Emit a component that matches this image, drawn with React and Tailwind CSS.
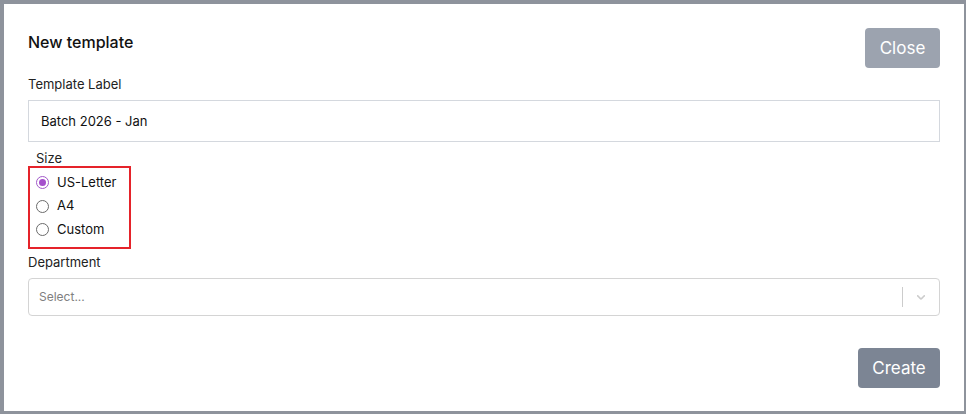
import React, { useState } from "react";

const sizes = ["US-Letter", "A4", "Custom"];

const App = () => {
  const [size, setSize] = useState("US-Letter");
  const [label, setLabel] = useState("Batch 2026 - Jan");

  return (
    <div
      className="w-[966px] h-[414px] bg-[#8e939c] pt-[4px] pl-[4px] pr-[2px] pb-[3px]"
      style={{ fontFamily: "Inter, 'Noto Sans', sans-serif" }}
    >
      <div className="bg-white h-full px-[24px] pt-[24px] flex flex-col">
        {/* Header */}
        <div className="flex items-start justify-between">
          <h2 className="text-[16px] font-medium text-[#111] mt-[2px]">New template</h2>
          <button className="w-[75px] h-[40px] bg-[#9ca3af] text-white text-[17px] rounded-[4px] pt-[1px]">
            Close
          </button>
        </div>

        {/* Template label */}
        <label className="block text-[13px] text-[#222] mt-[8px] leading-[16px]">Template Label</label>
        <input
          value={label}
          onChange={(e) => setLabel(e.target.value)}
          className="mt-[8px] h-[42px] w-full border border-[#d4d8de] px-[12px] text-[13px] text-[#111] outline-none"
        />

        {/* Size */}
        <div className="text-[13px] text-[#222] ml-[8px] mt-[8px] leading-[16px]">Size</div>
        <div className="w-[103px] border-2 border-[#e5232a] mt-[0px] pt-[6px] pb-[9px] pl-[6px] flex flex-col gap-[6.5px]">
          {sizes.map((s) => (
            <label key={s} className="flex items-center gap-[8px] text-[13px] text-[#111] h-[17px] cursor-pointer">
              <span
                className={
                  "w-[13px] h-[13px] rounded-full border flex items-center justify-center " +
                  (size === s ? "border-[#a259c9]" : "border-[#6b6b6b]")
                }
                onClick={() => setSize(s)}
              >
                {size === s && <span className="w-[7px] h-[7px] rounded-full bg-[#a54fcc]" />}
              </span>
              {s}
            </label>
          ))}
        </div>

        {/* Department */}
        <div className="text-[13px] text-[#222] mt-[5px] leading-[16px]">Department</div>
        <div className="mt-[8px] h-[38px] w-full border border-[#d4d4d4] rounded-[4px] flex items-center">
          <span className="flex-1 pl-[10px] text-[12px] text-[#808080]">Select...</span>
          <span className="w-px h-[20px] bg-[#cccccc]" />
          <span className="w-[36px] flex items-center justify-center text-[#cccccc]">
            <svg width="14" height="14" viewBox="0 0 20 20" fill="currentColor">
              <path d="M4.516 7.548c0.436-0.446 1.043-0.481 1.576 0l3.908 3.747 3.908-3.747c0.533-0.481 1.141-0.446 1.574 0 0.436 0.445 0.408 1.197 0 1.615-0.406 0.418-4.695 4.502-4.695 4.502-0.217 0.223-0.502 0.335-0.787 0.335s-0.57-0.112-0.789-0.335c0 0-4.287-4.084-4.695-4.502s-0.436-1.17 0-1.615z" />
            </svg>
          </span>
        </div>

        {/* Footer */}
        <div className="flex justify-end mt-[32px]">
          <button className="w-[82px] h-[40px] bg-[#7c8594] text-white text-[17px] rounded-[4px] pt-[1px]">
            Create
          </button>
        </div>
      </div>
    </div>
  );
};

export default App;
